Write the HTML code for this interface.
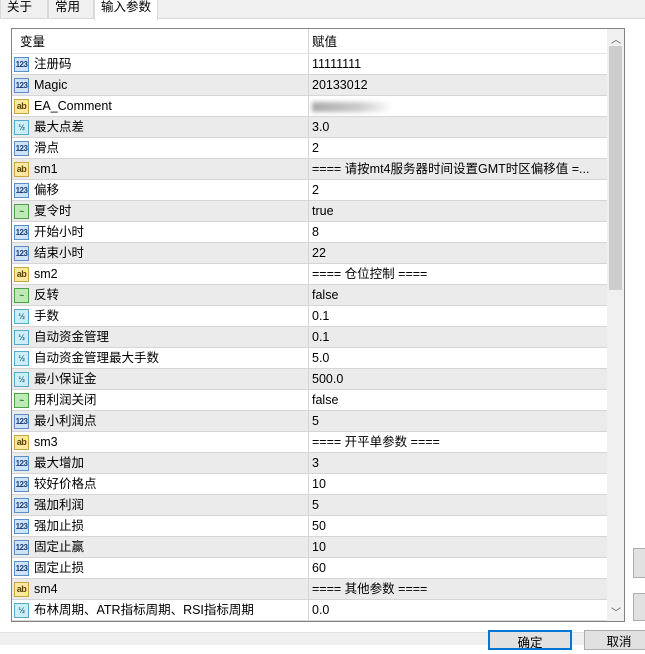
<!DOCTYPE html>
<html><head><meta charset="utf-8"><style>
*{margin:0;padding:0;box-sizing:border-box}
body{width:645px;height:645px;overflow:hidden;background:#fff;font-family:"Liberation Sans","Noto Sans CJK SC",sans-serif;font-size:12.5px;color:#000;position:relative}
.tabs{position:absolute;left:0;top:0;width:645px;height:19px;background:#f0f0f0;border-bottom:1px solid #d9d9d9}
.tab{position:absolute;top:0;height:19px;line-height:15px;padding-left:6px;border:1px solid #d9d9d9;border-top:none;background:#f0f0f0}
.tab.act{background:#fff;height:20px;border-bottom:none}
.list{position:absolute;left:11px;top:28px;width:614px;height:594px;border:1px solid #828282;overflow:hidden;background:#fff}
.hdr{position:absolute;left:0;top:0;width:596px;height:25px;line-height:26px;border-bottom:1px solid #e5e5e5}
.row{position:absolute;left:0;width:596px;height:21px;line-height:21px;border-bottom:1px solid #d6d6d6}
.row.g{background:#ebebeb}
.c1{position:absolute;left:22px;white-space:nowrap}
.c2{position:absolute;left:300px;white-space:nowrap}
.sep{position:absolute;left:296px;top:0;width:1px;height:594px;background:#d6d6d6}
.ic{position:absolute;left:2px;top:3px;width:15px;height:15px;font-size:8px;line-height:13px;text-align:center;border:1px solid #5a8fc8;background:#cfe2f6;color:#1c3f7a;font-weight:bold;letter-spacing:-0.5px}
.ic.ab{background:#fbe9a0;border-color:#c9a53a;color:#5a4300;font-size:9px}
.ic.hf{background:#cdeef5;border-color:#53aacb;color:#1e6c8c}
.ic.bl{background:#bfe9b8;border-color:#4ea046;color:#1d6b19}
.sb{position:absolute;left:595px;top:0;width:17px;height:592px;background:#f0f0f0}
.thumb{position:absolute;left:2px;top:17px;width:13px;height:244px;background:#cdcdcd}
.bottom{position:absolute;left:0;top:632px;width:645px;height:13px;background:#f0f0f0;border-top:1px solid #e0e0e0}
.btn{position:absolute;height:20px;border:1px solid #adadad;background:#e1e1e1;text-align:center;line-height:22px}
</style></head><body>
<div class="tabs">
<div class="tab" style="left:0;width:48px">关于</div>
<div class="tab" style="left:48px;width:46px">常用</div>
<div class="tab act" style="left:94px;width:64px">输入参数</div>
</div>
<div class="list">
<div class="hdr"><span class="c1" style="left:8px">变量</span><span class="c2">赋值</span></div>
<div class="row" style="top:25px"><div class="ic">123</div><span class="c1">注册码</span><span class="c2">11111111</span></div>
<div class="row g" style="top:46px"><div class="ic">123</div><span class="c1">Magic</span><span class="c2">20133012</span></div>
<div class="row" style="top:67px"><div class="ic ab">ab</div><span class="c1">EA_Comment</span><span class="c2" style="top:6px;width:80px;height:10px;background:linear-gradient(90deg,#aaa,#ccc 60%,#fff);filter:blur(2px)"></span></div>
<div class="row g" style="top:88px"><div class="ic hf">½</div><span class="c1">最大点差</span><span class="c2">3.0</span></div>
<div class="row" style="top:109px"><div class="ic">123</div><span class="c1">滑点</span><span class="c2">2</span></div>
<div class="row g" style="top:130px"><div class="ic ab">ab</div><span class="c1">sm1</span><span class="c2">==== 请按mt4服务器时间设置GMT时区偏移值 =...</span></div>
<div class="row" style="top:151px"><div class="ic">123</div><span class="c1">偏移</span><span class="c2">2</span></div>
<div class="row g" style="top:172px"><div class="ic bl">~</div><span class="c1">夏令时</span><span class="c2">true</span></div>
<div class="row" style="top:193px"><div class="ic">123</div><span class="c1">开始小时</span><span class="c2">8</span></div>
<div class="row g" style="top:214px"><div class="ic">123</div><span class="c1">结束小时</span><span class="c2">22</span></div>
<div class="row" style="top:235px"><div class="ic ab">ab</div><span class="c1">sm2</span><span class="c2">==== 仓位控制 ====</span></div>
<div class="row g" style="top:256px"><div class="ic bl">~</div><span class="c1">反转</span><span class="c2">false</span></div>
<div class="row" style="top:277px"><div class="ic hf">½</div><span class="c1">手数</span><span class="c2">0.1</span></div>
<div class="row g" style="top:298px"><div class="ic hf">½</div><span class="c1">自动资金管理</span><span class="c2">0.1</span></div>
<div class="row" style="top:319px"><div class="ic hf">½</div><span class="c1">自动资金管理最大手数</span><span class="c2">5.0</span></div>
<div class="row g" style="top:340px"><div class="ic hf">½</div><span class="c1">最小保证金</span><span class="c2">500.0</span></div>
<div class="row" style="top:361px"><div class="ic bl">~</div><span class="c1">用利润关闭</span><span class="c2">false</span></div>
<div class="row g" style="top:382px"><div class="ic">123</div><span class="c1">最小利润点</span><span class="c2">5</span></div>
<div class="row" style="top:403px"><div class="ic ab">ab</div><span class="c1">sm3</span><span class="c2">==== 开平单参数 ====</span></div>
<div class="row g" style="top:424px"><div class="ic">123</div><span class="c1">最大增加</span><span class="c2">3</span></div>
<div class="row" style="top:445px"><div class="ic">123</div><span class="c1">较好价格点</span><span class="c2">10</span></div>
<div class="row g" style="top:466px"><div class="ic">123</div><span class="c1">强加利润</span><span class="c2">5</span></div>
<div class="row" style="top:487px"><div class="ic">123</div><span class="c1">强加止损</span><span class="c2">50</span></div>
<div class="row g" style="top:508px"><div class="ic">123</div><span class="c1">固定止赢</span><span class="c2">10</span></div>
<div class="row" style="top:529px"><div class="ic">123</div><span class="c1">固定止损</span><span class="c2">60</span></div>
<div class="row g" style="top:550px"><div class="ic ab">ab</div><span class="c1">sm4</span><span class="c2">==== 其他参数 ====</span></div>
<div class="row" style="top:571px"><div class="ic hf">½</div><span class="c1">布林周期、ATR指标周期、RSI指标周期</span><span class="c2">0.0</span></div>
<div class="sep"></div>
<div class="sb"><div style="position:absolute;top:2px;left:4px;font-size:10px;color:#555">︿</div><div class="thumb"></div><div style="position:absolute;bottom:2px;left:4px;font-size:10px;color:#555">﹀</div></div>
</div>
<div class="bottom"></div>
<div class="btn" style="left:633px;top:548px;width:20px;height:30px"></div>
<div class="btn" style="left:633px;top:593px;width:20px;height:28px"></div>
<div class="btn" style="left:488px;top:630px;width:84px;border:2px solid #0078d7">确定</div>
<div class="btn" style="left:584px;top:630px;width:70px">取消</div>
</body></html>
